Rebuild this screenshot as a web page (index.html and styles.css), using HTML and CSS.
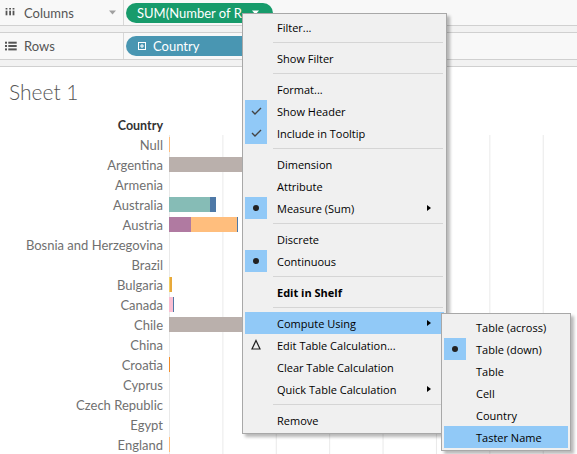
FILE: index.html
```html
<!DOCTYPE html>
<html>
<head>
<meta charset="utf-8">
<link rel="stylesheet" href="styles.css">
</head>
<body>
<div class="page">
  <div class="shelves">
    <div class="shelf">
      <div class="shelf-label">
        <svg class="sicon" width="12" height="12" viewBox="0 0 12 12"><rect x="0.6" y="1" width="1.8" height="1.5" fill="#555"/><rect x="4.2" y="1" width="1.8" height="1.5" fill="#555"/><rect x="7.6" y="1" width="1.8" height="1.5" fill="#555"/><rect x="0.6" y="3.7" width="1.8" height="4.6" fill="#555"/><rect x="4.2" y="3.7" width="1.8" height="4.6" fill="#555"/><rect x="7.6" y="3.7" width="1.8" height="4.6" fill="#555"/></svg>
        <span class="slabel">Columns</span>
        <svg class="scaret" width="7" height="5" viewBox="0 0 7 5"><polygon points="0,0.5 7,0.5 3.5,4.5" fill="#a0a0a0"/></svg>
      </div>
      <div class="shelf-body">
        <div class="pill pill-green">
          <span class="pill-text">SUM(Number of R..</span>
          <svg class="pcaret" width="7" height="5" viewBox="0 0 7 5"><polygon points="0,0.5 7,0.5 3.5,4.5" fill="#fff"/></svg>
        </div>
      </div>
    </div>
    <div class="shelf-gap"></div>
    <div class="shelf shelf-rows">
      <div class="shelf-label">
        <svg class="sicon" width="12" height="10" viewBox="0 0 12 10"><rect x="0" y="0.7" width="2" height="2" fill="#555"/><rect x="3.3" y="0.7" width="8.4" height="2" fill="#555"/><rect x="0" y="4" width="2" height="2" fill="#555"/><rect x="3.3" y="4" width="8.4" height="2" fill="#555"/><rect x="0" y="7.4" width="2" height="2" fill="#555"/><rect x="3.3" y="7.4" width="8.4" height="2" fill="#555"/></svg>
        <span class="slabel">Rows</span>
      </div>
      <div class="shelf-body">
        <div class="pill pill-blue">
          <svg class="pbox" width="8" height="8" viewBox="0 0 8 8"><rect x="0.5" y="0.5" width="7" height="7" fill="none" stroke="#fff" stroke-width="1"/><line x1="2" y1="4" x2="6" y2="4" stroke="#fff"/><line x1="4" y1="2" x2="4" y2="6" stroke="#fff"/></svg>
          <span class="pill-text">Country</span>
        </div>
      </div>
    </div>
    <div class="shelf-gap"></div>
  </div>

  <div class="sheet-title">Sheet 1</div>

  <div class="chart">
    <div class="chart-head"><div class="col-head">Country</div></div>
    <div class="chart-body">
      <div class="labels">
        <div class="lbl">Null</div>
        <div class="lbl">Argentina</div>
        <div class="lbl">Armenia</div>
        <div class="lbl">Australia</div>
        <div class="lbl">Austria</div>
        <div class="lbl">Bosnia and Herzegovina</div>
        <div class="lbl">Brazil</div>
        <div class="lbl">Bulgaria</div>
        <div class="lbl">Canada</div>
        <div class="lbl">Chile</div>
        <div class="lbl">China</div>
        <div class="lbl">Croatia</div>
        <div class="lbl">Cyprus</div>
        <div class="lbl">Czech Republic</div>
        <div class="lbl">Egypt</div>
        <div class="lbl">England</div>
      </div>
      <div class="plot">
        <div class="brow"><div class="seg c-lorange" style="width:1px"></div></div>
        <div class="brow"><div class="seg c-gray" style="width:200px"></div></div>
        <div class="brow"></div>
        <div class="brow"><div class="seg c-teal" style="width:41px"></div><div class="seg c-blue" style="width:6px"></div></div>
        <div class="brow"><div class="seg c-purple" style="width:22px"></div><div class="seg c-lorange" style="width:46px"></div><div class="seg c-blue" style="width:1px"></div></div>
        <div class="brow"></div>
        <div class="brow"></div>
        <div class="brow"><div class="seg c-yellow" style="width:1px"></div><div class="seg c-gold" style="width:2px"></div></div>
        <div class="brow"><div class="seg c-pink" style="width:4px"></div><div class="seg c-blue" style="width:1px"></div></div>
        <div class="brow"><div class="seg c-gray" style="width:200px"></div></div>
        <div class="brow"></div>
        <div class="brow"><div class="seg c-orange" style="width:1px"></div></div>
        <div class="brow"></div>
        <div class="brow"></div>
        <div class="brow"></div>
        <div class="brow"><div class="seg c-lorange" style="width:1px"></div></div>
      </div>
    </div>
  </div>

  <div class="menu main-menu">
    <div class="mi"><span class="ic"></span><span class="tx">Filter...</span></div>
    <div class="sep"></div>
    <div class="mi"><span class="ic"></span><span class="tx">Show Filter</span></div>
    <div class="sep"></div>
    <div class="mi"><span class="ic"></span><span class="tx">Format...</span></div>
    <div class="mi"><span class="ic on"><svg width="22" height="22" viewBox="0 0 22 22"><polyline points="7,11 10,14 16,8" fill="none" stroke="#444" stroke-width="1.4"/></svg></span><span class="tx">Show Header</span></div>
    <div class="mi"><span class="ic on"><svg width="22" height="22" viewBox="0 0 22 22"><polyline points="7,11 10,14 16,8" fill="none" stroke="#444" stroke-width="1.4"/></svg></span><span class="tx">Include in Tooltip</span></div>
    <div class="sep"></div>
    <div class="mi"><span class="ic"></span><span class="tx">Dimension</span></div>
    <div class="mi"><span class="ic"></span><span class="tx">Attribute</span></div>
    <div class="mi"><span class="ic on"><span class="dot"></span></span><span class="tx">Measure (Sum)</span><span class="arr"></span></div>
    <div class="sep"></div>
    <div class="mi"><span class="ic"></span><span class="tx">Discrete</span></div>
    <div class="mi"><span class="ic on"><span class="dot"></span></span><span class="tx">Continuous</span></div>
    <div class="sep"></div>
    <div class="mi"><span class="ic"></span><span class="tx bold">Edit in Shelf</span></div>
    <div class="sep"></div>
    <div class="mi hl"><span class="ic"></span><span class="tx">Compute Using</span><span class="arr"></span></div>
    <div class="mi"><span class="ic"><svg width="22" height="22" viewBox="0 0 22 22"><polygon points="11,6.5 15,15 7,15" fill="none" stroke="#222" stroke-width="1.2"/></svg></span><span class="tx">Edit Table Calculation...</span></div>
    <div class="mi"><span class="ic"></span><span class="tx">Clear Table Calculation</span></div>
    <div class="mi"><span class="ic"></span><span class="tx">Quick Table Calculation</span><span class="arr"></span></div>
    <div class="sep"></div>
    <div class="mi"><span class="ic"></span><span class="tx">Remove</span></div>
  </div>

  <div class="menu sub-menu">
    <div class="mi"><span class="ic"></span><span class="tx">Table (across)</span></div>
    <div class="mi"><span class="ic on"><span class="dot"></span></span><span class="tx">Table (down)</span></div>
    <div class="mi"><span class="ic"></span><span class="tx">Table</span></div>
    <div class="mi"><span class="ic"></span><span class="tx">Cell</span></div>
    <div class="mi"><span class="ic"></span><span class="tx">Country</span></div>
    <div class="mi hl"><span class="ic"></span><span class="tx">Taster Name</span></div>
  </div>
</div>
</body>
</html>
```

FILE: styles.css
```css
* { box-sizing: border-box; }
html, body { margin: 0; padding: 0; }
body { width: 577px; height: 454px; overflow: hidden; background: #fff; }
.page { position: relative; width: 577px; height: 454px; overflow: hidden; font-family: Lato, "Open Sans", sans-serif; }

.shelves { background: #f8f8f8; }
.shelf { display: flex; height: 26px; border-bottom: 1px solid #d0d0d0; }
.shelf-rows { height: 27px; }
.shelf-gap { height: 7px; background: #f2f2f2; border-bottom: 1px solid #d0d0d0; }
.shelf-label { width: 124px; border-right: 1px solid #d8d8d8; display: flex; align-items: center; padding-left: 5px; }
.sicon { flex: none; }
.slabel { margin-left: 7px; font-size: 13px; color: #555; }
.scaret { margin-left: auto; margin-right: 7px; }
.shelf-body { flex: 1; display: flex; align-items: center; padding-left: 2px; }
.pill { height: 20px; border-radius: 10px; display: flex; align-items: center; color: #fff; font-size: 13px; }
.pill-green { width: 147px; background: #179b6b; padding-left: 11px; padding-right: 14px; }
.pill-green .pill-text { flex: 1; white-space: nowrap; overflow: hidden; }
.pcaret { flex: none; }
.pill-blue { width: 140px; background: #4996b2; padding-left: 12px; }
.pbox { margin-right: 7px; }

.sheet-title { margin: 13px 0 0 9px; height: 24px; line-height: 24px; font-size: 21px; font-weight: 300; color: #555; }

.chart { margin-top: 13px; }
.chart-head { height: 18px; display: flex; }
.col-head { width: 169px; padding-right: 6px; text-align: right; font-size: 12.5px; font-weight: 700; color: #333; line-height: 18px; }
.chart-body { display: flex; }
.labels { width: 169px; flex: none; }
.lbl { height: 20px; line-height: 20px; padding-right: 6px; text-align: right; font-size: 13px; color: #707070; white-space: nowrap; }
.plot { flex: 1; background-image: linear-gradient(to right, #e9e9e9 0, #e9e9e9 1px, transparent 1px); background-size: 53.4px 100%; }
.brow { height: 20px; display: flex; padding-top: 2px; }
.seg { height: 15px; flex: none; }
.c-gray { background: #bab0ac; }
.c-teal { background: #86bcb6; }
.c-blue { background: #4e79a7; }
.c-purple { background: #b07aa1; }
.c-lorange { background: #ffbe7d; }
.c-orange { background: #f28e2b; }
.c-yellow { background: #f1ce63; }
.c-gold { background: #e8a93a; }
.c-pink { background: #fabfd2; }

.menu { position: absolute; background: #f0f0f0; border: 1px solid #a8a8a8; box-shadow: 3px 3px 3px rgba(0,0,0,0.28); padding: 2px 0; font-family: "Open Sans", "Noto Sans", sans-serif; font-size: 11px; color: #000; }
.main-menu { left: 242px; top: 13px; width: 205px; }
.sub-menu { left: 441px; top: 313px; width: 130px; }
.mi { height: 22px; display: flex; align-items: center; margin: 0 2px; }
.mi.hl { background: #91c9f7; }
.ic { width: 22px; height: 22px; flex: none; display: flex; align-items: center; justify-content: center; }
.ic.on { background: #91c9f7; }
.dot { width: 6px; height: 6px; border-radius: 50%; background: #222; }
.tx { margin-left: 10px; flex: 1; white-space: nowrap; }
.tx.bold { font-weight: 700; }
.arr { width: 0; height: 0; border-top: 3.5px solid transparent; border-bottom: 3.5px solid transparent; border-left: 4px solid #000; margin-right: 13px; }
.sep { height: 1px; background: #d5d5d5; margin: 4px 3px 4px 30px; }
```
